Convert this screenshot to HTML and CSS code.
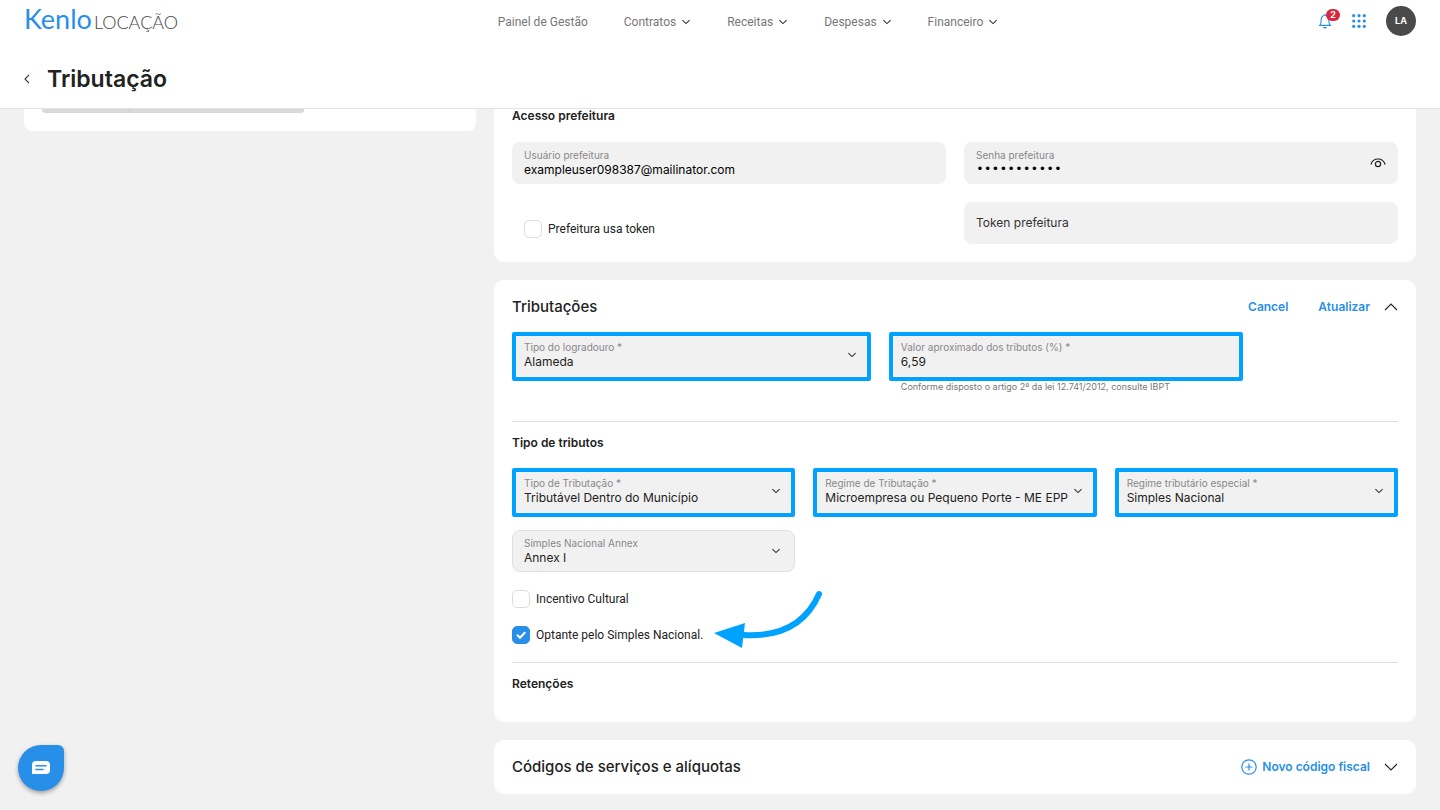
FILE: index.html
```
<!DOCTYPE html>
<html lang="pt-BR">
<head>
    <meta charset="UTF-8">
    <meta name="viewport" content="width=device-width, initial-scale=1.0">
    <title>Tributação</title>
    <link rel="stylesheet" href="styles.css">
</head>
<body>
    <!-- Icons used more than once -->
    <svg class="sprite" aria-hidden="true">
        <symbol id="chevron" viewBox="0 0 10 6">
            <path d="M1.4 1.2 5 4.6 8.6 1.2" fill="none" stroke="currentColor" stroke-width="1.1"/>
        </symbol>
        <symbol id="chevron-big" viewBox="0 0 14 8">
            <path d="M1 1 7 7 13 1" fill="none" stroke="currentColor" stroke-width="1.1"/>
        </symbol>
    </svg>

    <header class="header">
        <div class="topbar">
            <a class="logo" href="#"><span class="logo-name">Kenlo</span><span class="logo-product">LOCAÇÃO</span></a>
            <nav class="menu">
                <a href="#">Painel de Gestão</a>
                <a href="#">Contratos <svg class="chevron"><use href="#chevron"/></svg></a>
                <a href="#">Receitas <svg class="chevron"><use href="#chevron"/></svg></a>
                <a href="#">Despesas <svg class="chevron"><use href="#chevron"/></svg></a>
                <a href="#">Financeiro <svg class="chevron"><use href="#chevron"/></svg></a>
            </nav>
            <div class="tools">
                <button class="icon-btn bell" aria-label="Notificações">
                    <svg width="14" height="16" viewBox="0 0 14 16">
                        <path d="M1 12.4h12M2.2 12.2c.8-1.3.9-2.6.9-5 0-3 1.5-5 3.9-5s3.9 2 3.9 5c0 2.4.1 3.7.9 5M7 2V.7" fill="none" stroke="#288fe8" stroke-width="1.1"/>
                        <path d="M5 14h4c-.3 1-1 1.6-2 1.6s-1.7-.6-2-1.6z" fill="#288fe8"/>
                    </svg>
                    <span class="badge">2</span>
                </button>
                <button class="icon-btn" aria-label="Aplicativos">
                    <svg width="14" height="14" viewBox="0 0 14 14" fill="#288fe8">
                        <circle cx="1.7" cy="1.7" r="1.6"/><circle cx="7" cy="1.7" r="1.6"/><circle cx="12.3" cy="1.7" r="1.6"/>
                        <circle cx="1.7" cy="7" r="1.6"/><circle cx="7" cy="7" r="1.6"/><circle cx="12.3" cy="7" r="1.6"/>
                        <circle cx="1.7" cy="12.3" r="1.6"/><circle cx="7" cy="12.3" r="1.6"/><circle cx="12.3" cy="12.3" r="1.6"/>
                    </svg>
                </button>
                <button class="avatar">LA</button>
            </div>
        </div>
        <div class="title-row">
            <button class="icon-btn" aria-label="Voltar">
                <svg width="6" height="10" viewBox="0 0 6 10"><path d="M5 .8 1 5l4 4.2" fill="none" stroke="#333" stroke-width="1.1"/></svg>
            </button>
            <h1>Tributação</h1>
        </div>
    </header>

    <main class="page">
        <aside class="card side-card">
            <div class="side-bar"><span></span><span></span></div>
        </aside>

        <div class="content">
            <section class="card access-card">
                <h3>Acesso prefeitura</h3>
                <div class="grid-2">
                    <div class="field">
                        <div class="field-body">
                            <label for="usuario">Usuário prefeitura</label>
                            <input class="black" type="text" id="usuario" value="exampleuser098387@mailinator.com">
                        </div>
                    </div>
                    <div class="field field-eye">
                        <div class="field-body">
                            <label for="senha">Senha prefeitura</label>
                            <input class="black" type="password" id="senha" value="12345678901">
                        </div>
                        <button class="icon-btn" aria-label="Mostrar senha">
                            <svg width="16" height="10" viewBox="0 0 16 10" fill="none" stroke="#222" stroke-width="1.2">
                                <path d="M.9 6.5C2 3 4.7 1 8 1s6 2 7.1 5.5"/><circle cx="8" cy="6" r="2.6"/>
                            </svg>
                        </button>
                    </div>
                    <label class="check check-indent"><input type="checkbox"> Prefeitura usa token</label>
                    <div class="field">
                        <input type="text" placeholder="Token prefeitura" aria-label="Token prefeitura">
                    </div>
                </div>
            </section>

            <section class="card">
                <div class="card-head">
                    <h2>Tributações</h2>
                    <div class="actions">
                        <button class="link-btn cancel">Cancel</button>
                        <button class="link-btn">Atualizar</button>
                        <button class="icon-btn" aria-label="Recolher"><svg class="chevron-big up"><use href="#chevron-big"/></svg></button>
                    </div>
                </div>
                <div class="grid-address">
                    <div class="field highlight">
                        <div class="field-body">
                            <label for="logradouro">Tipo do logradouro *</label>
                            <select id="logradouro"><option>Alameda</option></select>
                        </div>
                        <svg class="chevron"><use href="#chevron"/></svg>
                    </div>
                    <div>
                        <div class="field highlight">
                            <div class="field-body">
                                <label for="valor">Valor aproximado dos tributos (%) *</label>
                                <input type="text" id="valor" value="6,59">
                            </div>
                        </div>
                        <p class="hint">Conforme disposto o artigo 2º da lei 12.741/2012, consulte IBPT</p>
                    </div>
                </div>

                <hr>
                <h3>Tipo de tributos</h3>
                <div class="grid-3">
                    <div class="field highlight">
                        <div class="field-body">
                            <label for="tipo">Tipo de Tributação *</label>
                            <select id="tipo"><option>Tributável Dentro do Município</option></select>
                        </div>
                        <svg class="chevron"><use href="#chevron"/></svg>
                    </div>
                    <div class="field highlight">
                        <div class="field-body">
                            <label for="regime">Regime de Tributação *</label>
                            <select id="regime"><option>Microempresa ou Pequeno Porte - ME EPP</option></select>
                        </div>
                        <svg class="chevron"><use href="#chevron"/></svg>
                    </div>
                    <div class="field highlight">
                        <div class="field-body">
                            <label for="especial">Regime tributário especial *</label>
                            <select id="especial"><option>Simples Nacional</option></select>
                        </div>
                        <svg class="chevron"><use href="#chevron"/></svg>
                    </div>
                    <div class="field bordered">
                        <div class="field-body">
                            <label for="annex">Simples Nacional Annex</label>
                            <select id="annex"><option>Annex I</option></select>
                        </div>
                        <svg class="chevron"><use href="#chevron"/></svg>
                    </div>
                </div>
                <div class="checks">
                    <label class="check"><input type="checkbox"> Incentivo Cultural</label>
                    <label class="check">
                        <input type="checkbox" checked> Optante pelo Simples Nacional.
                        <svg class="arrow" width="110" height="60" viewBox="0 0 110 60">
                            <path d="M105 5C92 35 67 48 30 46" fill="none" stroke="#00a2ff" stroke-width="6" stroke-linecap="round"/>
                            <path d="M0 44 31 34 28 59z" fill="#00a2ff"/>
                        </svg>
                    </label>
                </div>

                <hr>
                <h3 class="last">Retenções</h3>
            </section>

            <section class="card">
                <div class="card-head">
                    <h2>Códigos de serviços e alíquotas</h2>
                    <div class="actions">
                        <button class="link-btn">
                            <svg width="16" height="16" viewBox="0 0 16 16" fill="none" stroke="#288fe8" stroke-width="1.2"><circle cx="8" cy="8" r="7.2"/><path d="M8 4.5v7M4.5 8h7"/></svg>
                            Novo código fiscal
                        </button>
                        <button class="icon-btn" aria-label="Expandir"><svg class="chevron-big"><use href="#chevron-big"/></svg></button>
                    </div>
                </div>
            </section>
        </div>
    </main>

    <button class="chat" aria-label="Chat">
        <svg width="18" height="14" viewBox="0 0 18 14">
            <path d="M4 0h10q4 0 4 4v5q0 4-4 4H0V4q0-4 4-4z" fill="#fff"/>
            <path d="M4 4.7h10M4 8.5h7" stroke="#288fe8" stroke-width="1.5" stroke-linecap="round"/>
        </svg>
    </button>
</body>
</html>
```
FILE: styles.css
```
* {
    box-sizing: border-box;
}
body {
    margin: 0;
    background-color: #f1f1f1;
    color: #222;
    font-family: Inter, "Open Sans", sans-serif;
    font-size: 12px;
    line-height: 16px;
}
h1, h2, h3, p {
    margin: 0;
}
button, input, select {
    font: inherit;
    color: inherit;
    border: 0;
    padding: 0;
    background: none;
}
a {
    color: inherit;
    text-decoration: none;
}
svg {
    display: block;
    flex-shrink: 0;
}
.sprite {
    position: absolute;
    width: 0;
    height: 0;
}

/* Header */
.header {
    position: sticky;
    top: 0;
    z-index: 2;
    background-color: #fff;
    border-bottom: 1px solid #e3e3e3;
    padding: 0 24px;
}
.topbar {
    display: flex;
    justify-content: space-between;
    align-items: center;
    height: 42px;
}
.logo {
    display: flex;
    align-items: baseline;
    gap: 2px;
    padding-bottom: 2px;
    line-height: 28px;
}
.logo-name {
    font-family: Lato, sans-serif;
    font-size: 27px;
    color: #288fe8;
}
.logo-product {
    font-family: Lato, sans-serif;
    font-weight: 300;
    font-size: 18px;
    color: #444;
}
.menu {
    display: flex;
    gap: 36px;
    padding-top: 2px;
    color: #777;
    font-family: Roboto, sans-serif;
}
.menu a {
    display: flex;
    align-items: center;
    gap: 5px;
}
.chevron {
    width: 10px;
    height: 6px;
    color: #333;
}
.tools {
    display: flex;
    align-items: center;
    gap: 20px;
}
.icon-btn {
    display: flex;
    cursor: pointer;
}
.bell {
    position: relative;
}
.badge {
    position: absolute;
    top: -4px;
    left: 8px;
    width: 14px;
    border-radius: 6px;
    background-color: #d9263a;
    color: #fff;
    font-size: 9px;
    font-weight: 700;
    line-height: 12px;
    text-align: center;
}
.avatar {
    width: 30px;
    height: 30px;
    border-radius: 50%;
    background-color: #4a4a4a;
    color: #fff;
    font-size: 9px;
    font-weight: 700;
}
.title-row {
    display: flex;
    align-items: center;
    gap: 17px;
    height: 66px;
    padding-top: 8px;
}
h1 {
    font-size: 23px;
    font-weight: 600;
    line-height: 30px;
}

/* Page */
.page {
    display: grid;
    grid-template-columns: 452fr 922fr;
    gap: 18px;
    align-items: start;
    padding: 0 24px 15px;
}
.content {
    display: flex;
    flex-direction: column;
    gap: 18px;
}
.card {
    padding: 18px;
    border-radius: 10px;
    background-color: #fff;
}
.side-card {
    padding-top: 0;
    border-radius: 0 0 8px 8px;
}
.side-bar {
    display: flex;
    gap: 1px;
    width: 63%;
    height: 4px;
    border-radius: 0 0 8px 8px;
    background-color: #ccc;
    overflow: hidden;
}
.side-bar span {
    flex: 2;
    background-color: #d9d9d9;
}
.side-bar span:first-child {
    flex: 1;
}
.access-card {
    padding-top: 0;
    border-radius: 0 0 10px 10px;
}
.access-card h3 {
    line-height: 14px;
    margin-bottom: 19px;
}
h2 {
    font-size: 15px;
    font-weight: 500;
    line-height: 18px;
}
h3 {
    font-size: 12px;
    font-weight: 600;
    line-height: 16px;
}
.card-head, .actions {
    display: flex;
    align-items: center;
}
.card-head {
    justify-content: space-between;
}
.actions {
    gap: 14px;
}
.link-btn {
    display: flex;
    align-items: center;
    gap: 5px;
    color: #288fe8;
    font-weight: 600;
    cursor: pointer;
}
.cancel {
    margin-right: 16px;
}
.chevron-big {
    width: 14px;
    height: 8px;
}
.up {
    transform: rotate(180deg);
}
hr {
    height: 1px;
    margin: 0 0 13px;
    border: 0;
    background-color: #ddd;
}

/* Fields */
.grid-2, .grid-3, .grid-address {
    display: grid;
    gap: 18px;
}
.grid-2 {
    grid-template-columns: 1fr 1fr;
}
.grid-3 {
    grid-template-columns: repeat(3, 1fr);
    margin: 19px 0 18px;
}
.grid-address {
    grid-template-columns: 40.5% 40%;
    align-items: start;
    margin: 18px 0 27px;
}
.field {
    position: relative;
    display: flex;
    align-items: center;
    height: 42px;
    padding: 0 14px 0 12px;
    border-radius: 8px;
    background-color: #f1f1f1;
}
.field-eye {
    padding-right: 12px;
}
.bordered {
    border: 1px solid #e0e0e0;
    padding: 0 13px 0 11px;
}
.field-body {
    display: flex;
    flex: 1;
    flex-direction: column;
    min-width: 0;
}
.field-body label {
    color: #888;
    font-size: 10px;
    line-height: 13px;
}
.field input, .field select {
    width: 100%;
    height: 16px;
    appearance: none;
    outline: none;
}
.field .black {
    color: #000;
}
.field input[type="password"] {
    font-family: "Liberation Mono", monospace;
    font-size: 13px;
}
.field input::placeholder {
    color: #333;
    opacity: 1;
}
.highlight::after {
    content: "";
    position: absolute;
    inset: -2px 0 -5px;
    border: 4px solid #00a2ff;
    border-radius: 2px;
    pointer-events: none;
}
.hint {
    padding: 4px 12px 0;
    color: #777;
    font-size: 9px;
    line-height: 14px;
}

/* Checkboxes */
.checks {
    display: flex;
    flex-direction: column;
    align-items: flex-start;
    gap: 18px;
    margin-bottom: 18px;
}
.check {
    position: relative;
    display: flex;
    align-items: center;
    gap: 6px;
    font-family: Roboto, sans-serif;
    line-height: 18px;
}
.check-indent {
    padding: 12px 12px 0;
}
.check input {
    width: 18px;
    height: 18px;
    margin: 0;
    border: 1px solid #ddd;
    border-radius: 5px;
    background-color: #fff;
    appearance: none;
}
.check input:checked {
    border-color: #288fe8;
    background: #288fe8 url("data:image/svg+xml,%3Csvg xmlns='http://www.w3.org/2000/svg' viewBox='0 0 16 16'%3E%3Cpath d='M4.5 8.2l2.5 2.5 4.7-4.9' fill='none' stroke='white' stroke-width='2' stroke-linecap='round'/%3E%3C/svg%3E") center / 16px no-repeat;
}
.arrow {
    position: absolute;
    bottom: -5px;
    left: 202px;
}
.last {
    margin-bottom: 12px;
}

.chat {
    position: fixed;
    bottom: 19px;
    left: 18px;
    display: flex;
    align-items: center;
    justify-content: center;
    width: 46px;
    height: 46px;
    border-radius: 50% 6px 50% 50%;
    background-color: #288fe8;
    box-shadow: 0 2px 4px rgba(0, 0, 0, 0.35);
}
```
